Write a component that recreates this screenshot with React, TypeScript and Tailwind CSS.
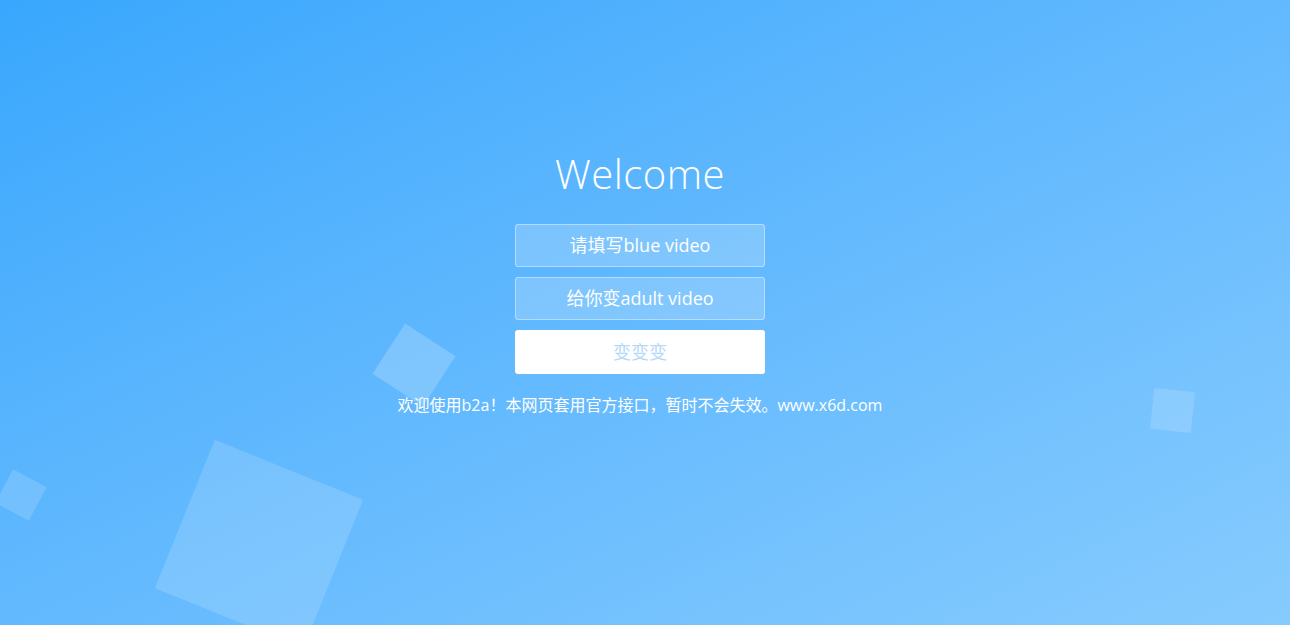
import React from "react";

export default function App() {
  return (
    <div className="relative w-full h-[625px] overflow-hidden bg-gradient-to-br from-[#38a7fd] to-[#86cbfe]">
      {/* floating squares */}
      <div className="absolute left-[384px] top-[335px] w-[60px] h-[60px] rotate-[33deg] bg-white/20" />
      <div className="absolute left-[179px] top-[464px] w-[160px] h-[160px] rotate-[22deg] bg-white/15" />
      <div className="absolute left-[2px] top-[476px] w-[38px] h-[38px] rotate-[28deg] bg-white/15" />
      <div className="absolute left-[1152px] top-[390px] w-[41px] h-[41px] rotate-[6deg] bg-white/15" />

      <div
        className="relative flex flex-col items-center pt-[150px] pr-[10px]"
        style={{ fontFamily: '"Open Sans", "Noto Sans CJK SC", sans-serif' }}
      >
        <h1 className="text-[40px] leading-[48px] font-light tracking-[0.5px] text-white">Welcome</h1>
        <div className="mt-[26px] flex flex-col gap-[10px]">
          <div className="w-[250px] h-[43px] flex items-center justify-center rounded-[3px] border border-white/40 bg-white/20 text-[18px] text-white">
            请填写blue video
          </div>
          <div className="w-[250px] h-[43px] flex items-center justify-center rounded-[3px] border border-white/40 bg-white/20 text-[18px] text-white">
            给你变adult video
          </div>
          <div className="w-[250px] h-[44px] flex items-center justify-center rounded-[3px] bg-white text-[18px] text-[#b3d9f7]">
            变变变
          </div>
        </div>
        <p className="mt-[21px] text-[16px] leading-[20px] text-white">
          欢迎使用b2a！本网页套用官方接口，暂时不会失效。www.x6d.com
        </p>
      </div>
    </div>
  );
}
